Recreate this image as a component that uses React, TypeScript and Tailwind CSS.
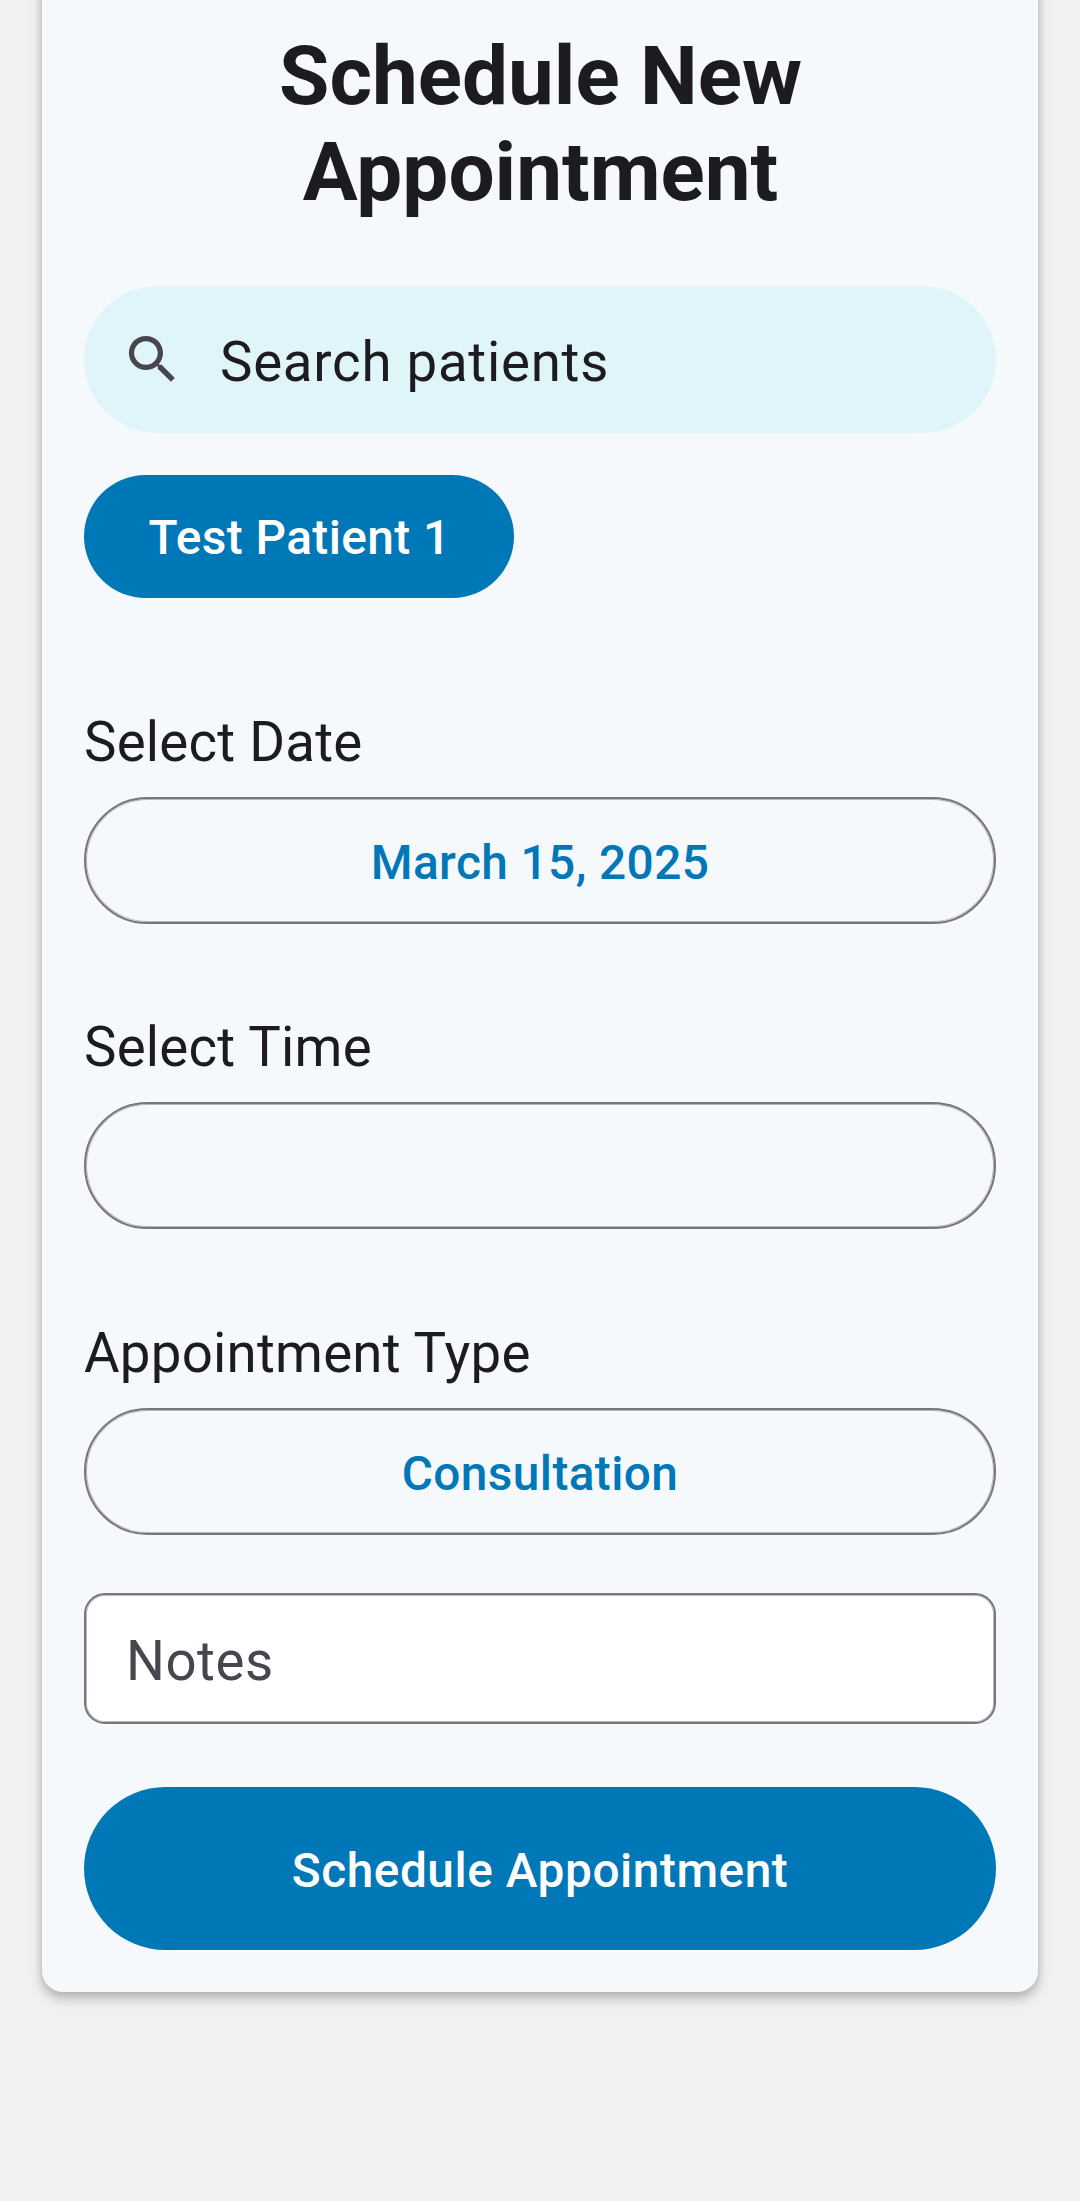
import type { ReactNode } from "react";

const FONT = "font-['Roboto',sans-serif]";

function Label({ children }: { children: ReactNode }) {
  return (
    <label className="block h-[72px] text-[54.6px] leading-[72px] tracking-[0.24px] text-[#1c1b1f]">
      {children}
    </label>
  );
}

function OutlinedButton({ children }: { children?: ReactNode }) {
  return (
    <button className="flex h-[127px] w-full items-center justify-center rounded-full border-2 border-[#79747e] pt-[4.6px] text-[47.8px] leading-[64px] font-medium tracking-[0.4px] text-[#0077b6] shadow-[inset_0_0_0_1px_rgba(121,116,126,0.5)]">
      {children}
    </button>
  );
}

function Field({ label, value }: { label: string; value?: string }) {
  return (
    <div className="flex h-[218px] flex-col justify-between">
      <Label>{label}</Label>
      <OutlinedButton>{value}</OutlinedButton>
    </div>
  );
}

export default function App() {
  return (
    <main className={`h-[2201px] overflow-hidden bg-[#f1f1f1] px-[42px] ${FONT}`}>
      <section className="-mt-[40px] flex h-[2032px] flex-col rounded-[21px] bg-[#f5f9fc] px-[42px] pt-[68px] shadow-[0_7px_12px_rgba(0,0,0,0.22),0_0_8px_rgba(0,0,0,0.13)]">
        <h1 className="pl-[1px] text-center text-[81.8px] leading-[96px] font-bold text-[#1c1b1f]">
          Schedule New
          <br />
          Appointment
        </h1>

        <div className="mt-[66px] flex h-[147px] items-center rounded-full bg-[#e0f5fa] pl-[37px]">
          <svg viewBox="0 0 24 24" className="size-[63px] shrink-0 fill-[#49454f]">
            <path d="M9.5,3A6.5,6.5 0 0,1 16,9.5C16,11.11 15.41,12.59 14.44,13.73L14.71,14H15.5L20.5,19L19,20.5L14,15.5V14.71L13.73,14.44C12.59,15.41 11.11,16 9.5,16A6.5,6.5 0 0,1 3,9.5A6.5,6.5 0 0,1 9.5,3M9.5,5C7,5 5,7 5,9.5C5,12 7,14 9.5,14C12,14 14,12 14,9.5C14,7 12,5 9.5,5Z" />
          </svg>
          <span className="pt-[4px] pl-[36px] text-[54.6px] leading-[72px] tracking-[0.75px] text-[#1c1b1f]">
            Search patients
          </span>
        </div>

        <button className="mt-[42px] flex h-[123px] w-[430px] items-center justify-center rounded-full bg-[#0077b6] pt-[3px] pl-[1px] text-[47.8px] leading-[64px] font-medium tracking-[0.42px] text-white">
          Test Patient 1
        </button>

        <div className="mt-[108px] flex flex-col gap-[87.4px]">
          <Field label="Select Date" value="March 15, 2025" />
          <Field label="Select Time" />
          <Field label="Appointment Type" value="Consultation" />
        </div>

        <div className="mt-[58.2px] flex h-[131px] items-center rounded-[21px] border-2 border-[#79747e] bg-white pt-[5px] pl-[40px] text-[54.6px] leading-[72px] tracking-[0.51px] text-[#49454f] shadow-[inset_0_0_0_1px_rgba(121,116,126,0.5)]">
          Notes
        </div>

        <button className="mt-[63px] flex h-[163px] w-full items-center justify-center rounded-full bg-[#0077b6] pt-[4.4px] text-[47.8px] leading-[64px] font-medium tracking-[0.54px] text-white">
          Schedule Appointment
        </button>
      </section>
    </main>
  );
}
